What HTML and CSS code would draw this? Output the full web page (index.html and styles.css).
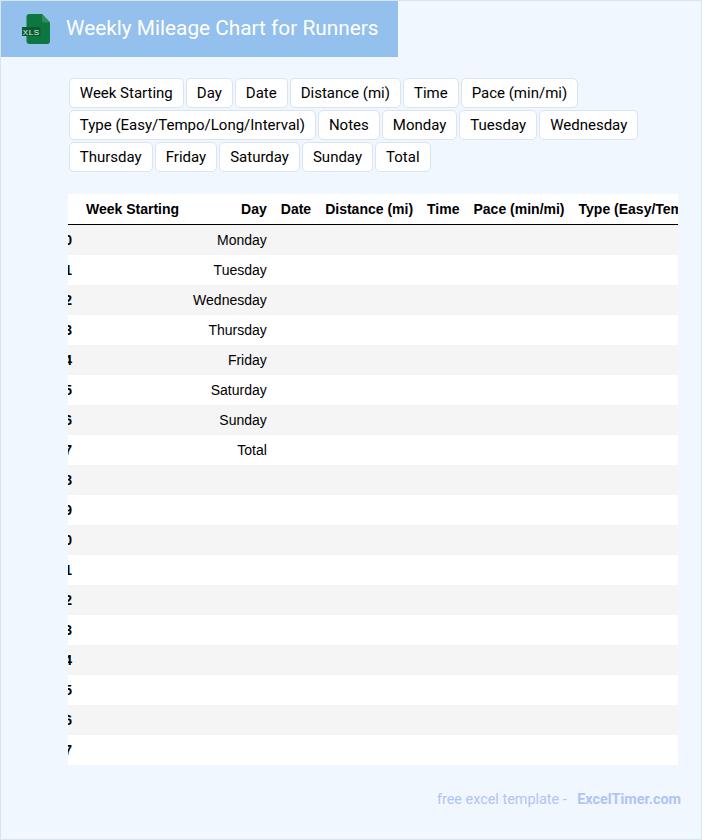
FILE: index.html
```html
<!DOCTYPE html>
<html lang="en">
<head>
<meta charset="utf-8">
<title>Weekly Mileage Chart for Runners</title>
<link rel="stylesheet" href="styles.css">
</head>
<body>
<div class="page">
  <header class="banner">
    <svg class="file-icon" width="30" height="32" viewBox="0 0 30 32" aria-hidden="true">
      <path class="file-body" d="M8.5 1H21l8 8.500V28a3 3 0 0 1-3 3H8.500a3 3 0 0 1-3-3V4a3 3 0 0 1 3-3z"/>
      <path class="file-fold" d="M21 1l8 8.500h-6a2 2 0 0 1-2-2z"/>
      <rect class="file-band" x="1" y="14" width="18.500" height="9"/>
      <text class="file-label" x="10.200" y="21.500" text-anchor="middle">XLS</text>
    </svg>
    <h1 class="title">Weekly Mileage Chart for Runners</h1>
  </header>
  <main class="content">
    <ul class="chips">
      <li class="chip">Week Starting</li>
      <li class="chip">Day</li>
      <li class="chip">Date</li>
      <li class="chip">Distance (mi)</li>
      <li class="chip">Time</li>
      <li class="chip">Pace (min/mi)</li>
      <li class="chip">Type (Easy/Tempo/Long/Interval)</li>
      <li class="chip">Notes</li>
      <li class="chip">Monday</li>
      <li class="chip">Tuesday</li>
      <li class="chip">Wednesday</li>
      <li class="chip">Thursday</li>
      <li class="chip">Friday</li>
      <li class="chip">Saturday</li>
      <li class="chip">Sunday</li>
      <li class="chip">Total</li>
    </ul>
    <div class="table-scroll">
      <table class="sheet">
        <thead>
          <tr><th></th><th>Week Starting</th><th>Day</th><th>Date</th><th>Distance (mi)</th><th>Time</th><th>Pace (min/mi)</th><th>Type (Easy/Tempo/Long/Interval)</th><th>Notes</th></tr>
        </thead>
        <tbody>
          <tr><th>0</th><td></td><td>Monday</td><td></td><td></td><td></td><td></td><td></td><td></td></tr>
          <tr><th>1</th><td></td><td>Tuesday</td><td></td><td></td><td></td><td></td><td></td><td></td></tr>
          <tr><th>2</th><td></td><td>Wednesday</td><td></td><td></td><td></td><td></td><td></td><td></td></tr>
          <tr><th>3</th><td></td><td>Thursday</td><td></td><td></td><td></td><td></td><td></td><td></td></tr>
          <tr><th>4</th><td></td><td>Friday</td><td></td><td></td><td></td><td></td><td></td><td></td></tr>
          <tr><th>5</th><td></td><td>Saturday</td><td></td><td></td><td></td><td></td><td></td><td></td></tr>
          <tr><th>6</th><td></td><td>Sunday</td><td></td><td></td><td></td><td></td><td></td><td></td></tr>
          <tr><th>7</th><td></td><td>Total</td><td></td><td></td><td></td><td></td><td></td><td></td></tr>
          <tr><th>8</th><td></td><td></td><td></td><td></td><td></td><td></td><td></td><td></td></tr>
          <tr><th>9</th><td></td><td></td><td></td><td></td><td></td><td></td><td></td><td></td></tr>
          <tr><th>10</th><td></td><td></td><td></td><td></td><td></td><td></td><td></td><td></td></tr>
          <tr><th>11</th><td></td><td></td><td></td><td></td><td></td><td></td><td></td><td></td></tr>
          <tr><th>12</th><td></td><td></td><td></td><td></td><td></td><td></td><td></td><td></td></tr>
          <tr><th>13</th><td></td><td></td><td></td><td></td><td></td><td></td><td></td><td></td></tr>
          <tr><th>14</th><td></td><td></td><td></td><td></td><td></td><td></td><td></td><td></td></tr>
          <tr><th>15</th><td></td><td></td><td></td><td></td><td></td><td></td><td></td><td></td></tr>
          <tr><th>16</th><td></td><td></td><td></td><td></td><td></td><td></td><td></td><td></td></tr>
          <tr><th>17</th><td></td><td></td><td></td><td></td><td></td><td></td><td></td><td></td></tr>
        </tbody>
      </table>
    </div>
  </main>
  <footer class="credit">free excel template - <a class="credit-link">ExcelTimer.com</a></footer>
</div>
</body>
</html>
```

FILE: styles.css
```css
* {
  box-sizing: border-box;
}

html,
body {
  margin: 0;
  padding: 0;
  height: 100%;
}

body {
  font-family: Roboto, "Liberation Sans", sans-serif;
  color: #000;
  background: #f0f7ff;
}

.page {
  height: 840px;
  border: 1px solid #d9e4f1;
  overflow: hidden;
  background: #f0f7ff;
}

.banner {
  display: flex;
  align-items: center;
  width: 397px;
  height: 56px;
  padding-left: 20px;
  background: #93c0ed;
}

.file-icon {
  flex: none;
  display: block;
}

.file-body {
  fill: #0e7741;
}

.file-fold {
  fill: #2f8f5c;
}

.file-band {
  fill: #0b5c33;
}

.file-label {
  font-family: "Liberation Sans", sans-serif;
  font-size: 8px;
  fill: #e8f3ec;
  letter-spacing: 0.6px;
}

.title {
  margin: 0 0 2px 15px;
  font-size: 20.8px;
  font-weight: 400;
  color: #fff;
  white-space: nowrap;
}

.content {
  width: 610.2px;
  margin-left: 66.8px;
  padding-top: 20px;
}

.chips {
  display: flex;
  flex-wrap: wrap;
  margin: 0;
  padding: 0;
  list-style: none;
}

.chip {
  height: 30px;
  margin: 1px;
  padding: 0 10px;
  border: 1px solid #d9e4f1;
  border-radius: 5px;
  background: #fff;
  font-size: 15px;
  line-height: 28px;
  white-space: nowrap;
}

.table-scroll {
  margin-top: 21px;
  overflow: hidden;
  background: #fff;
}

.sheet {
  margin-left: -18.4px;
  border-collapse: separate;
  border-spacing: 0;
  font-family: "Liberation Sans", sans-serif;
  font-size: 14px;
  white-space: nowrap;
}

.sheet thead th {
  height: 31px;
  padding: 0 7px;
  border-bottom: 1px solid #000;
  text-align: right;
}

.sheet tbody th,
.sheet tbody td {
  height: 30px;
  padding: 0 7px;
  text-align: right;
}

.sheet tbody tr:nth-child(odd) {
  background: #f5f5f5;
}

.credit {
  margin-top: 26px;
  padding-right: 20px;
  text-align: right;
  font-size: 14.4px;
  line-height: 18px;
  color: #b0c4f5;
}

.credit-link {
  margin-left: 7px;
  font-weight: 700;
}
```
